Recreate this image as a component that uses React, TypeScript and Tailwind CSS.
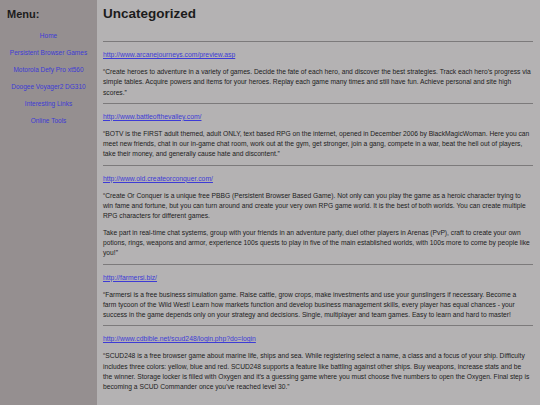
const menu = [
  "Home",
  "Persistent Browser Games",
  "Motorola Defy Pro xt560",
  "Doogee Voyager2 DG310",
  "Interesting Links",
  "Online Tools",
];

type Post = { url: string; paras: string[] };

const posts: Post[] = [
  {
    url: "http://www.arcanejourneys.com/preview.asp",
    paras: [
      "“Create heroes to adventure in a variety of games. Decide the fate of each hero, and discover the best strategies. Track each hero’s progress via simple tables. Acquire powers and items for your heroes. Replay each game many times and still have fun. Achieve personal and site high scores.”",
    ],
  },
  {
    url: "http://www.battleofthevalley.com/",
    paras: [
      "“BOTV is the FIRST adult themed, adult ONLY, text based RPG on the internet, opened in December 2006 by BlackMagicWoman. Here you can meet new friends, chat in our in-game chat room, work out at the gym, get stronger, join a gang, compete in a war, beat the hell out of players, take their money, and generally cause hate and discontent.”",
    ],
  },
  {
    url: "http://www.old.createorconquer.com/",
    paras: [
      "“Create Or Conquer is a unique free PBBG (Persistent Browser Based Game). Not only can you play the game as a heroic character trying to win fame and fortune, but you can turn around and create your very own RPG game world. It is the best of both worlds. You can create multiple RPG characters for different games.",
      "Take part in real-time chat systems, group with your friends in an adventure party, duel other players in Arenas (PvP), craft to create your own potions, rings, weapons and armor, experience 100s quests to play in five of the main established worlds, with 100s more to come by people like you!”",
    ],
  },
  {
    url: "http://farmersi.biz/",
    paras: [
      "“Farmersi is a free business simulation game. Raise cattle, grow crops, make investments and use your gunslingers if necessary. Become a farm tycoon of the Wild West! Learn how markets function and develop business management skills, every player has equal chances - your success in the game depends only on your strategy and decisions. Single, multiplayer and team games. Easy to learn and hard to master!",
    ],
  },
  {
    url: "http://www.cdbible.net/scud248/login.php?do=login",
    paras: [
      "“SCUD248 is a free browser game about marine life, ships and sea. While registering select a name, a class and a focus of your ship. Difficulty includes three colors: yellow, blue and red. SCUD248 supports a feature like battling against other ships. Buy weapons, increase stats and be the winner. Storage locker is filled with Oxygen and it’s a guessing game where you must choose five numbers to open the Oxygen. Final step is becoming a SCUD Commander once you’ve reached level 30.”",
    ],
  },
];

export default function App() {
  return (
    <div className="flex h-[405px] w-[540px] overflow-hidden bg-[#b4b2b3] font-['Liberation_Sans',Arial,sans-serif] text-[#1c1c1c]">
      <aside className="w-[97px] shrink-0 bg-[#958f90] pt-[8px]">
        <h2 className="pl-[7px] text-[11px] font-bold leading-[12px]">Menu:</h2>
        <ul className="mt-[10px] flex flex-col gap-[6px] text-center text-[6.5px] leading-[11px] text-[#3d3bd6]">
          {menu.map((m) => (
            <li key={m}>
              <a href="#">{m}</a>
            </li>
          ))}
        </ul>
      </aside>

      <main className="flex-1 pl-[6px] pr-[7px] pt-[5px] leading-[10px]">
        <h1 className="text-[13.5px] font-bold leading-[18px]">Uncategorized</h1>
        <div className="mt-[18px]">
          {posts.map((p) => (
            <article key={p.url} className="border-t border-[#7c7a7b] pb-[5px] pt-[8px]">
              <a href="#" className="block text-[6.8px] leading-[10px] text-[#3d3bd6] underline">
                {p.url}
              </a>
              {p.paras.map((t, i) => (
                <p key={i} className={`${i === 0 ? "mt-[7px]" : "mt-[6px]"} pr-[2px] text-[6.7px] leading-[10.3px]`}>
                  {t}
                </p>
              ))}
            </article>
          ))}
        </div>
      </main>
    </div>
  );
}
